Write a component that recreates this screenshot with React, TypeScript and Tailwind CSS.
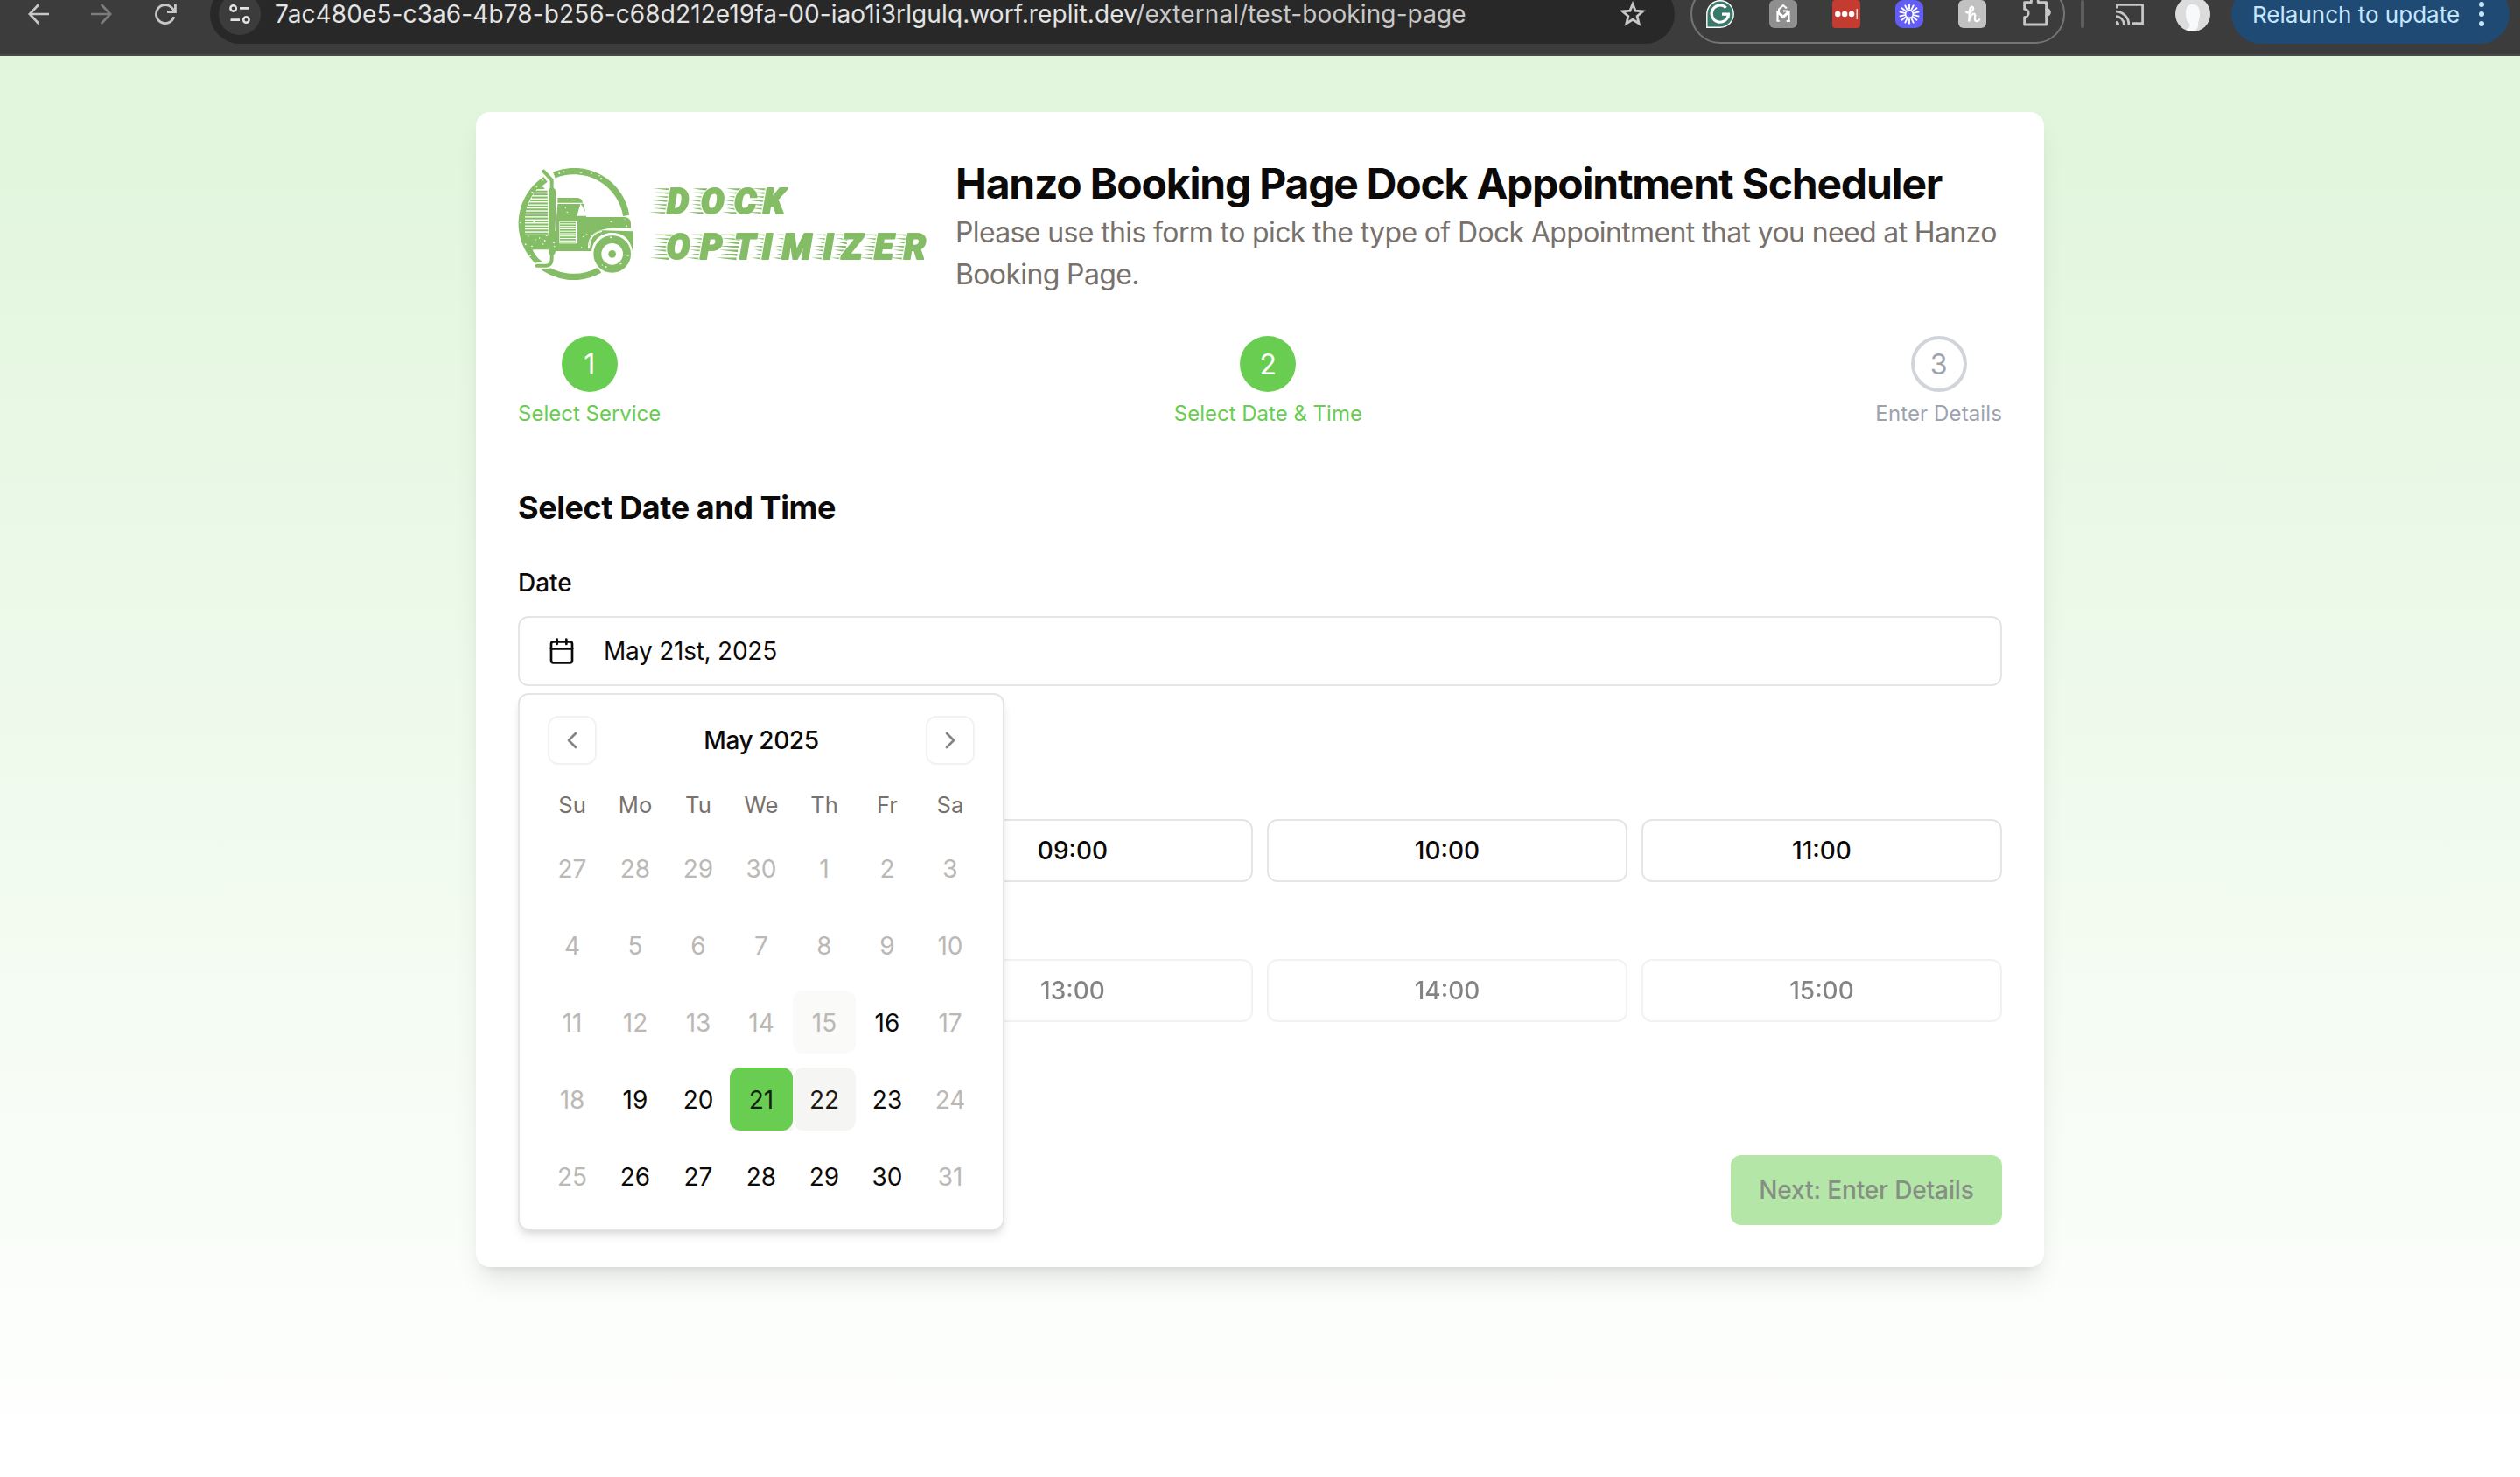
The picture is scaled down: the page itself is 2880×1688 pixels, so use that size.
import React from "react";
import { Calendar, ChevronLeft, ChevronRight } from "lucide-react";

const GREEN = "#84bd65";

function ReloadIcon() {
  return (
    <svg className="h-6 w-[26px]" viewBox="0 0 26 24" fill="none" stroke="#c7c7c7" strokeWidth="2.8">
      <path d="M22.8 15.2A10.4 10.4 0 1 1 21 5.6L23.6 8.6" />
      <path d="M24.4 0V9.6H15" />
    </svg>
  );
}

function ArrowIcon({ color, flip }: { color: string; flip?: boolean }) {
  return (
    <svg
      className={flip ? "h-6 w-6 -scale-x-100" : "h-6 w-6"}
      viewBox="0 0 24 24"
      fill="none"
      stroke={color}
      strokeWidth="2.7"
    >
      <path d="M24 12H2.5M12.3 1L1.9 12L12.3 23" />
    </svg>
  );
}

function TuneIcon() {
  return (
    <svg className="h-6 w-6" viewBox="0 0 24 24" fill="none" stroke="#e3e3e3" strokeWidth="2.6">
      <circle cx="4.6" cy="5.4" r="3.2" />
      <path d="M12 5.4H22.5M1.5 18.6H12" />
      <circle cx="19.4" cy="18.6" r="3.2" />
    </svg>
  );
}

function StarIcon() {
  return (
    <svg className="h-[30px] w-[30px]" viewBox="0 0 30 30" fill="none" stroke="#c7c7c7" strokeWidth="2.8">
      <path d="M15 3.6L18.1 11.2L26.6 11.9L20.1 17.4L22.1 25.7L15 21.2L7.9 25.7L9.9 17.4L3.4 11.9L11.9 11.2Z" />
    </svg>
  );
}

function GrammarlyIcon() {
  return (
    <svg className="h-8 w-8" viewBox="0 0 32 32" fill="none">
      <path d="M.8 31.2V16A15.2 15.2 0 1 1 16 31.2Z" fill="#37796a" stroke="#fff" strokeWidth="1.4" />
      <path d="M22.6 8.8A9.6 9.6 0 1 0 25.4 16.2H18" stroke="#fff" strokeWidth="3.2" />
      <path d="M25.4 16V21" stroke="#fff" strokeWidth="2" />
    </svg>
  );
}

function HouseIcon() {
  return (
    <svg className="h-8 w-8" viewBox="0 0 32 32" fill="none">
      <rect width="32" height="32" rx="6" fill="#8f8f8f" />
      <path d="M9.5 24V14L16 20L22.5 14V24H20" stroke="#fff" strokeWidth="2.2" />
      <path d="M8.5 24H12M19.5 24H24" stroke="#fff" strokeWidth="1.6" />
      <path d="M20 9.5L16 6L11 10.5V14.5L16 18.5L20.5 14.5V12.6H16" stroke="#fff" strokeWidth="2" />
    </svg>
  );
}

function DotsIcon() {
  return (
    <svg className="h-8 w-8" viewBox="0 0 32 32" fill="#fff">
      <rect width="32" height="32" rx="4" fill="#c43b32" />
      <circle cx="6.3" cy="16" r="3.2" />
      <circle cx="14.2" cy="16" r="3.2" />
      <circle cx="22.1" cy="16" r="3.2" />
      <rect x="27.6" y="10" width="1.2" height="12" />
    </svg>
  );
}

function BurstIcon() {
  return (
    <svg className="h-8 w-8" viewBox="0 0 32 32" fill="none">
      <rect width="32" height="32" rx="9" fill="#625df5" />
      <circle cx="16" cy="16" r="4.4" stroke="#fff" strokeWidth="1.8" />
      {Array.from({ length: 14 }, (_, i) => (
        <path
          key={i}
          d="M16 10.8V4.4"
          stroke="#fff"
          strokeWidth="1.9"
          transform={`rotate(${(i * 360) / 14} 16 16)`}
        />
      ))}
    </svg>
  );
}

function ScriptIcon() {
  return (
    <svg className="h-8 w-8" viewBox="0 0 32 32" fill="none">
      <rect width="32" height="32" rx="6" fill="#c1c1c1" />
      <path
        d="M9 13.5C12 16 17.5 12.5 17 9.3C16.6 6.6 13.3 7.6 13 11.5L12.2 24.5C13 19 15.5 15.3 18 15.6C21 16 17.4 22 19.8 23.8C21.3 24.8 23.2 23.8 24.2 22.2"
        stroke="#fff"
        strokeWidth="2.3"
        strokeLinecap="round"
      />
    </svg>
  );
}

function PuzzleIcon() {
  return (
    <svg className="h-9 w-8" viewBox="0 0 32 36" fill="none" stroke="#c7c7c7" strokeWidth="2.8" strokeLinejoin="round">
      <path d="M1.6 7.6H9.4V5.4A3.9 3.9 0 0 1 17.2 5.4V7.6H26.6V15.4A3.6 3.6 0 0 1 26.6 22.6V33H1.6V24.6A4.6 4.6 0 0 0 1.6 15.4Z" />
      <path d="M26.6 15.4A3.6 3.6 0 0 1 26.6 22.6Z" fill="#c7c7c7" />
    </svg>
  );
}

function CastIcon() {
  return (
    <svg className="h-6 w-8" viewBox="0 0 32 24" fill="none" stroke="#c7c7c7" strokeWidth="2.7">
      <path d="M1.4 5.5V1.4H30.6V22.6H18.5" />
      <path d="M0 9.2A14.6 14.6 0 0 1 14.8 24M0 14.7A9.2 9.2 0 0 1 9.3 24" />
      <path d="M0 20A4 4 0 0 1 4 24H0Z" fill="#c7c7c7" stroke="none" />
    </svg>
  );
}

function Avatar() {
  return (
    <svg className="h-10 w-10" viewBox="0 0 40 40">
      <circle cx="20" cy="20" r="20" fill="#dcdcdc" />
      <path
        d="M12 19C12 11 15 9 20 9C26 9 28 13 28 20C28 26 26 28 26 32C26 36 24 39 19 40C15 40 13 39 13 37C16 36 17 33 16 31C13 28 12 25 12 19Z"
        fill="#f7f9fb"
      />
    </svg>
  );
}

function BrowserBar() {
  return (
    <header className="h-16 w-full overflow-hidden border-b-2 border-[#4a4a4a] bg-[#3c3c3c]">
      <div className="-mt-[18px] flex h-[68px] items-center pl-8">
        <ArrowIcon color="#c7c7c7" />
        <div className="ml-12">
          <ArrowIcon color="#7c7c7c" flip />
        </div>
        <div className="ml-12">
          <ReloadIcon />
        </div>
        <div className="ml-[38px] flex h-[68px] w-[1674px] items-center rounded-full bg-[#282828] pr-[33px] pl-[10px]">
          <div className="flex h-12 w-12 items-center justify-center rounded-full bg-[#3c3c3c]">
            <TuneIcon />
          </div>
          <div className="ml-4 text-[28px] tracking-[0.105px] whitespace-nowrap text-[#e3e3e3]">
            7ac480e5-c3a6-4b78-b256-c68d212e19fa-00-iao1i3rlgulq.worf.replit.dev
            <span className="text-[#c7c7c7]">/external/test-booking-page</span>
          </div>
          <div className="ml-auto">
            <StarIcon />
          </div>
        </div>
        <div className="ml-[18px] flex h-[68px] w-[428px] items-center gap-10 rounded-full border-2 border-[#757575] pl-4">
          <GrammarlyIcon />
          <HouseIcon />
          <DotsIcon />
          <BurstIcon />
          <ScriptIcon />
          <div className="-mt-[6px] ml-[2px]">
            <PuzzleIcon />
          </div>
        </div>
        <div className="ml-[18px] h-8 w-1 rounded-full bg-[#5f5f5f]" />
        <div className="ml-9">
          <CastIcon />
        </div>
        <div className="ml-9">
          <Avatar />
        </div>
        <div className="ml-6 flex h-[68px] w-[318px] items-center rounded-full bg-[#1f4a73] pr-[29px] pl-6 text-[26px] whitespace-nowrap text-[#c5e5ff]">
          <span>Relaunch to update</span>
          <svg className="ml-auto h-7 w-[6px]" viewBox="0 0 6 28" fill="#c5e5ff">
            <circle cx="3" cy="3" r="3" />
            <circle cx="3" cy="14" r="3" />
            <circle cx="3" cy="25" r="3" />
          </svg>
        </div>
      </div>
    </header>
  );
}

/* Tapered streaks that trail to the left of a slanted letter. */
function SpeedLines({ x, top, width }: { x: number; top: number; width: number }) {
  return (
    <g fill={GREEN}>
      {Array.from({ length: 7 }, (_, i) => {
        const y = top + i * 13.4;
        const right = x - i * 2.4;
        const left = right - width + (i % 3) * 6;
        return <path key={i} d={`M${left} ${y}L${right} ${y}V${y + 8}Z`} />;
      })}
    </g>
  );
}

const DOCK: [string, number, number][] = [
  ["D", 535, 70],
  ["O", 651, 52],
  ["C", 765, 50],
  ["K", 864, 62],
];
const OPTIMIZER: [string, number, number][] = [
  ["O", 533, 66],
  ["P", 649, 54],
  ["T", 765, 70],
  ["I", 860, 44],
  ["M", 929, 40],
  ["I", 1070, 48],
  ["Z", 1134, 46],
  ["E", 1246, 56],
  ["R", 1347, 56],
];

function LogoWord({ letters, top, base }: { letters: [string, number, number][]; top: number; base: number }) {
  const xs = letters.map((l) => l[1]).join(" ");
  const word = letters.map((l) => l[0]).join("");
  return (
    <g>
      {letters.map(([, x, w], i) => (
        <SpeedLines key={i} x={x + 22} top={top} width={w} />
      ))}
      <g style={{ filter: "drop-shadow(-4px 0 0 #fff)" }}>
        <text
          x={xs}
          y={base}
          fontFamily="Roboto"
          fontWeight="900"
          fontStyle="italic"
          fontSize="119"
          fill={GREEN}
          stroke={GREEN}
          strokeWidth="6"
          strokeLinejoin="round"
        >
          {word}
        </text>
      </g>
    </g>
  );
}

function Logo() {
  const specks = [
    [182, 36], [166, 42], [240, 40], [276, 43], [303, 50], [309, 61], [110, 65], [88, 88], [73, 107], [34, 183],
    [33, 212], [80, 208], [60, 258], [50, 286], [72, 292], [98, 264], [110, 285], [66, 324], [85, 270], [122, 256],
    [195, 133], [187, 160], [193, 175], [344, 208], [390, 199], [396, 223], [249, 259], [242, 297], [149, 293],
    [147, 279], [313, 357], [326, 363], [376, 353], [395, 345], [401, 325], [343, 262], [260, 250], [116, 273],
  ];
  return (
    <svg className="h-32 w-[468px] shrink-0" viewBox="24 24 1404 384" fill="none">
      <path d="M148 48A181 181 0 0 1 395 187" stroke={GREEN} strokeWidth="22" />
      <path d="M304 374A181 181 0 0 1 93 350" stroke={GREEN} strokeWidth="22" />
      <path
        d="M112 54A192 192 0 0 0 82 350L108 346Q84 330 74 304H135V252H48V190Q54 140 88 100L116 95Q112 88 104 88L125 71Z"
        fill={GREEN}
      />
      <path d="M48 252V190Q54 140 88 97H128V252Z" fill="#fff" />
      {Array.from({ length: 15 }, (_, i) => {
        const y = 101 + i * 10.3;
        const left = 48 + Math.max(0, 38 - i * 5.2);
        return <rect key={i} x={left - 4} y={y} width={125 + i * 0.2 - left + 4} height="6.2" fill={GREEN} />;
      })}
      <path d="M112 35L140 65V98" stroke={GREEN} strokeWidth="12" strokeLinecap="round" strokeLinejoin="round" />
      <path d="M140 310V335Q140 359 118 359H89" stroke="#fff" strokeWidth="22" />
      <path d="M140 310V335Q140 359 118 359H89" stroke={GREEN} strokeWidth="12" strokeLinecap="round" />
      <path d="M134 93H148L153 100V312L148 322H134L129 312V100Z" fill={GREEN} />
      <path d="M160 126H228Q243 127 246 143H160Z" fill={GREEN} />
      <path
        d="M160 147H238L226 188H258V192H390Q411 194 411 214V230H350Q300 232 280 255Q264 275 276 309H150V250Z"
        fill={GREEN}
      />
      <path d="M238 146H248L256 176L243 152Z" fill={GREEN} />
      <path d="M157 130L153 240" stroke="#fff" strokeWidth="3" />
      <rect x="166" y="207" width="62" height="76" fill="#fff" />
      {Array.from({ length: 9 }, (_, i) => (
        <rect key={i} x="168" y={209 + i * 8.3} width="54" height="5" fill={GREEN} />
      ))}
      <path d="M264 298Q262 234 345 232L420 238V320H276Z" fill="#fff" />
      <path d="M267 300C266 262 286 240 316 238L419 241V309H414C412 268 385 246 345 246C306 246 280 274 277 309H267Z" fill={GREEN} />
      <path d="M269 300C270 264 286 244 312 241" stroke="#fff" strokeWidth="4" />
      <path d="M345 232L411 232" stroke="#fff" strokeWidth="3" />
      <circle cx="347" cy="319" r="50.5" stroke="#fff" strokeWidth="40" />
      <circle cx="347" cy="319" r="50.5" stroke={GREEN} strokeWidth="27" />
      <circle cx="347" cy="319" r="13" fill={GREEN} />
      {specks.map(([x, y], i) => (
        <ellipse key={i} cx={x} cy={y} rx={2 + (i % 3)} ry={2 + (i % 2)} fill="#fff" opacity="0.85" />
      ))}
      <LogoWord letters={DOCK} top={94} base={179} />
      <LogoWord letters={OPTIMIZER} top={251} base={336} />
    </svg>
  );
}

function Step({ n, label, active }: { n: number; label: string; active: boolean }) {
  return (
    <div className="flex flex-col items-center">
      <div
        className={
          active
            ? "flex h-16 w-16 items-center justify-center rounded-full bg-[#69cd51] pt-0.5 text-[32px] text-white"
            : "flex h-16 w-16 items-center justify-center rounded-full border-4 border-[#d1d5db] pt-0.5 text-[32px] text-[#9ca3af]"
        }
      >
        {n}
      </div>
      <div
        className={
          active
            ? "mt-[9px] -mb-px text-[24px] leading-8 text-[#69cd51]"
            : "mt-[9px] -mb-px text-[24px] leading-8 tracking-[0.12px] text-[#9ca3af]"
        }
      >
        {label}
      </div>
    </div>
  );
}

const WEEKDAYS = ["Su", "Mo", "Tu", "We", "Th", "Fr", "Sa"];
const WEEKS = [
  [27, 28, 29, 30, 1, 2, 3],
  [4, 5, 6, 7, 8, 9, 10],
  [11, 12, 13, 14, 15, 16, 17],
  [18, 19, 20, 21, 22, 23, 24],
  [25, 26, 27, 28, 29, 30, 31],
];

function Day({ day, week, col }: { day: number; week: number; col: number }) {
  const enabled = (week === 2 && day === 16) || (week > 2 && col > 0 && col < 6);
  const base = "flex h-[72px] w-[72px] items-center justify-center pt-px text-[28px]";
  if (week === 3 && day === 21) {
    return (
      <div className="bg-[#f5f5f4]">
        <div className={`${base} rounded-xl bg-[#69cd51] text-[#132010]`}>{day}</div>
      </div>
    );
  }
  if (week === 3 && day === 22) return <div className={`${base} rounded-xl bg-[#f5f5f4] text-[#1c1917]`}>{day}</div>;
  if (week === 2 && day === 15) return <div className={`${base} rounded-xl bg-[#fafaf9] text-[#bbb8b5]`}>{day}</div>;
  return <div className={enabled ? `${base} text-[#0c0a09]` : `${base} text-[#bbb8b5]`}>{day}</div>;
}

function CalendarPopover() {
  return (
    <div className="absolute top-[88px] left-0 z-10 h-[614px] w-[556px] rounded-xl border-2 border-[#e5e5e5] bg-white px-6 pt-6 shadow-[0_8px_12px_-2px_rgba(0,0,0,0.1),0_4px_8px_-4px_rgba(0,0,0,0.1)]">
      <div className="flex h-14 items-center justify-between px-2">
        <button className="flex h-14 w-14 items-center justify-center rounded-xl border-2 border-[#f2f2f2]">
          <ChevronLeft className="h-8 w-8 text-[#858484]" />
        </button>
        <div className="text-[28px] font-medium tracking-[-0.4px] text-[#0c0a09]">May 2025</div>
        <button className="flex h-14 w-14 items-center justify-center rounded-xl border-2 border-[#f2f2f2]">
          <ChevronRight className="h-8 w-8 text-[#858484]" />
        </button>
      </div>
      <div className="mt-7 grid grid-cols-[repeat(7,72px)]">
        {WEEKDAYS.map((d) => (
          <div key={d} className="text-center text-[25.6px] leading-9 text-[#78716c]">
            {d}
          </div>
        ))}
      </div>
      <div className="mt-[18px] grid grid-cols-[repeat(7,72px)] gap-y-4">
        {WEEKS.map((week, w) => week.map((day, c) => <Day key={`${w}-${c}`} day={day} week={w} col={c} />))}
      </div>
    </div>
  );
}

function Slot({ time, disabled, first }: { time: string; disabled?: boolean; first?: boolean }) {
  return (
    <button
      className={`flex h-[72px] items-center justify-center rounded-xl border-2 border-[#e5e5e5] text-[28px] font-medium text-[#0c0a09] ${disabled ? "opacity-50" : ""} ${first ? "col-start-2" : ""}`}
    >
      {time}
    </button>
  );
}

export default function App() {
  return (
    <div className="flex h-[1688px] w-[2880px] flex-col overflow-hidden bg-white font-['Inter',sans-serif] text-[#0c0a09]">
      <BrowserBar />
      <main className="flex flex-1 flex-col items-center bg-linear-to-b from-[#e0f5db] to-white pt-16">
        <section className="w-[1792px] rounded-2xl bg-white p-12 shadow-[0_20px_30px_-6px_rgba(0,0,0,0.1),0_8px_12px_-8px_rgba(0,0,0,0.1)]">
          <div className="flex items-center gap-8">
            <Logo />
            <div className="pt-0.5 -mb-0.5">
              <h1 className="text-[48px] leading-[64px] font-bold tracking-[-1.2px] whitespace-nowrap">
                Hanzo Booking Page Dock Appointment Scheduler
              </h1>
              <p className="text-[32px] leading-[48px] tracking-[-0.63px] text-[#78716c]">
                Please use this form to pick the type of Dock Appointment that you need at Hanzo Booking Page.
              </p>
            </div>
          </div>
          <div className="mt-12 flex justify-between">
            <Step n={1} label="Select Service" active />
            <Step n={2} label="Select Date & Time" active />
            <Step n={3} label="Enter Details" active={false} />
          </div>
          <h2 className="mt-16 text-[36px] leading-[56px] font-bold tracking-[-0.42px]">Select Date and Time</h2>
          <div className="mt-[38px] text-[28px] leading-10 font-medium">Date</div>
          <div className="relative mt-[18px]">
            <div className="flex h-20 items-center rounded-xl border-2 border-[#e5e5e5] pl-8 text-[28px]">
              <Calendar className="h-8 w-8" />
              <span className="ml-8 tracking-[-0.25px]">May 21st, 2025</span>
            </div>
            <CalendarPopover />
          </div>
          <div className="mt-[152px] grid grid-cols-4 gap-4">
            <Slot time="09:00" first />
            <Slot time="10:00" />
            <Slot time="11:00" />
          </div>
          <div className="mt-[88px] grid grid-cols-4 gap-4">
            <Slot time="13:00" first disabled />
            <Slot time="14:00" disabled />
            <Slot time="15:00" disabled />
          </div>
          <div className="mt-[152px] flex justify-end">
            <button className="flex h-20 w-[310px] items-center justify-center rounded-xl bg-[#b4e6a8] text-[28px] font-medium tracking-[-0.12px] whitespace-nowrap text-[#868f84]">
              Next: Enter Details
            </button>
          </div>
        </section>
      </main>
    </div>
  );
}
